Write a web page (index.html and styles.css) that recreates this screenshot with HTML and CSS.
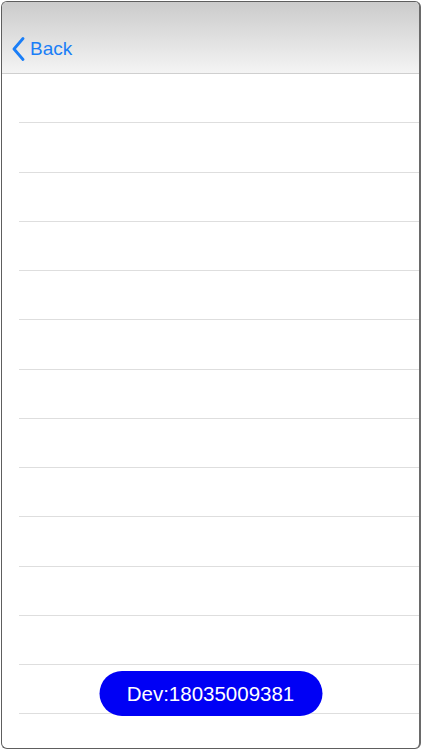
FILE: index.html
```html
<!DOCTYPE html>
<html>
<head>
<meta charset="utf-8">
<link rel="stylesheet" href="styles.css">
</head>
<body>
<div class="frame">
  <header class="navbar">
    <a class="back">
      <svg class="chev" width="16" height="24" viewBox="0 0 16 24"><path d="M12 1.5 L3 12 L12 22.5" fill="none" stroke="#1a7ef7" stroke-width="2.8" stroke-linecap="round" stroke-linejoin="round"/></svg>
      <span>Back</span>
    </a>
  </header>
  <ul class="list">
    <li class="row"></li><li class="row"></li><li class="row"></li><li class="row"></li>
    <li class="row"></li><li class="row"></li><li class="row"></li><li class="row"></li>
    <li class="row"></li><li class="row"></li><li class="row"></li><li class="row"></li>
    <li class="row"></li><li class="row"></li>
  </ul>
  <div class="dev">Dev:18035009381</div>
</div>
</body>
</html>
```
FILE: styles.css
```css
html, body { margin: 0; padding: 0; background: #fff; }
body { font-family: "Liberation Sans", Arial, sans-serif; }
.frame {
  position: relative;
  margin: 1px;
  height: 748px;
  box-sizing: border-box;
  border: 1px solid #5e5e5e;
  border-right: 2px solid #6a6a6a;
  border-radius: 6px;
  overflow: hidden;
  background: #fff;
}
.navbar {
  height: 72px;
  box-sizing: border-box;
  border-bottom: 1px solid #cfcfcf;
  background: linear-gradient(#cbcbcb, #f4f4f4);
  display: flex;
  align-items: flex-end;
  padding: 0 0 12px 9px;
}
.back {
  display: flex;
  align-items: center;
  gap: 3px;
  color: #1a7ef7;
  font-size: 19px;
}
.chev { display: block; margin-top: 1px; }
.list { list-style: none; margin: 0; padding: 0 0 0 17px; }
.row {
  height: 49.25px;
  box-sizing: border-box;
  border-bottom: 1px solid #dedede;
}
.dev {
  position: absolute;
  left: 50%;
  bottom: 32px;
  transform: translateX(-50%);
  width: 223px;
  height: 45px;
  border-radius: 23px;
  background: #0000f5;
  color: #fff;
  font-size: 20.5px;
  display: flex;
  align-items: center;
  justify-content: center;
}
```
